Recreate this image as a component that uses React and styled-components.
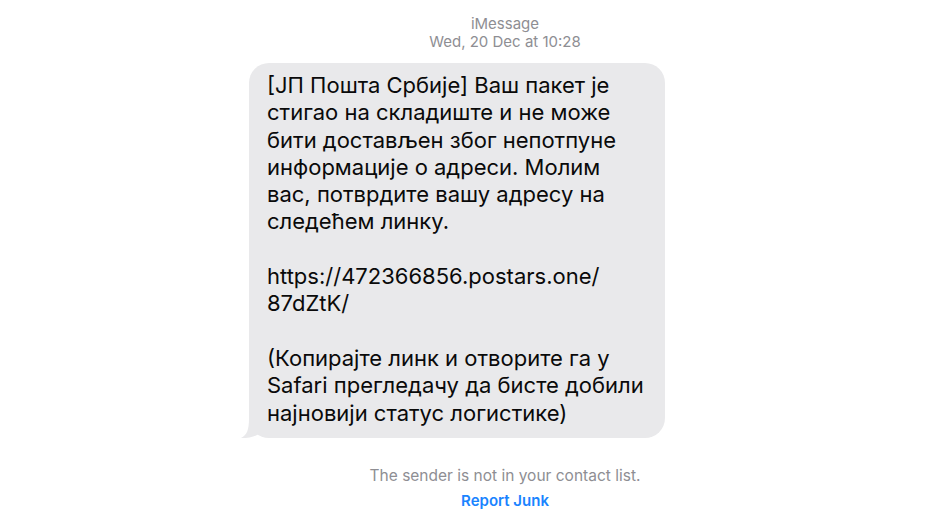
import React from "react";
import styled, { createGlobalStyle } from "styled-components";

const GlobalStyle = createGlobalStyle`
  body {
    margin: 0;
    background: #ffffff;
    font-family: Inter, "Liberation Sans", sans-serif;
  }
`;

const Page = styled.div`
  width: 930px;
  height: 523px;
  box-sizing: border-box;
  padding: 15px 0 0 80px;
  display: flex;
  flex-direction: column;
  align-items: center;
  overflow: hidden;
`;

const Header = styled.div`
  display: flex;
  flex-direction: column;
  align-items: center;
  color: #8e8e93;
  font-size: 15px;
  line-height: 18px;
`;

const Bubble = styled.div`
  position: relative;
  align-self: flex-start;
  margin: 12px 0 0 169px;
  width: 416px;
  box-sizing: border-box;
  padding: 9px 10px 11px 18px;
  background: #e9e9eb;
  border-radius: 20px;
  color: #0a0a0a;
  font-size: 22px;
  line-height: 27.3px;
`;

const Line = styled.div`
  height: 27.3px;
  white-space: nowrap;
`;

const Tail = styled.svg`
  position: absolute;
  left: -8px;
  bottom: 0;
`;

const Footer = styled.div`
  margin-top: 29px;
  display: flex;
  flex-direction: column;
  align-items: center;
  gap: 8px;
`;

const Note = styled.div`
  color: #8e8e93;
  font-size: 15.5px;
  line-height: 17px;
`;

const Action = styled.div`
  color: #1a84ff;
  font-size: 15px;
  font-weight: 600;
  line-height: 17px;
`;

const lines = [
  "[ЈП Пошта Србије] Ваш пакет је",
  "стигао на складиште и не може",
  "бити достављен због непотпуне",
  "информације о адреси. Молим",
  "вас, потврдите вашу адресу на",
  "следећем линку.",
  "",
  "https://472366856.postars.one/",
  "87dZtK/",
  "",
  "(Копирајте линк и отворите га у",
  "Safari прегледачу да бисте добили",
  "најновији статус логистике)",
];

export default function App() {
  return (
    <>
      <GlobalStyle />
      <Page>
        <Header>
          <div>iMessage</div>
          <div>Wed, 20 Dec at 10:28</div>
        </Header>
        <Bubble>
          {lines.map((l, i) => (
            <Line key={i}>{l}</Line>
          ))}
          <Tail width="24" height="20" viewBox="0 0 24 20">
            <path
              d="M20 0 L20 14 C 16 18, 10 20, 0 20 C 6 17, 8 12, 8 0 Z"
              fill="#e9e9eb"
            />
          </Tail>
        </Bubble>
        <Footer>
          <Note>The sender is not in your contact list.</Note>
          <Action>Report Junk</Action>
        </Footer>
      </Page>
    </>
  );
}
